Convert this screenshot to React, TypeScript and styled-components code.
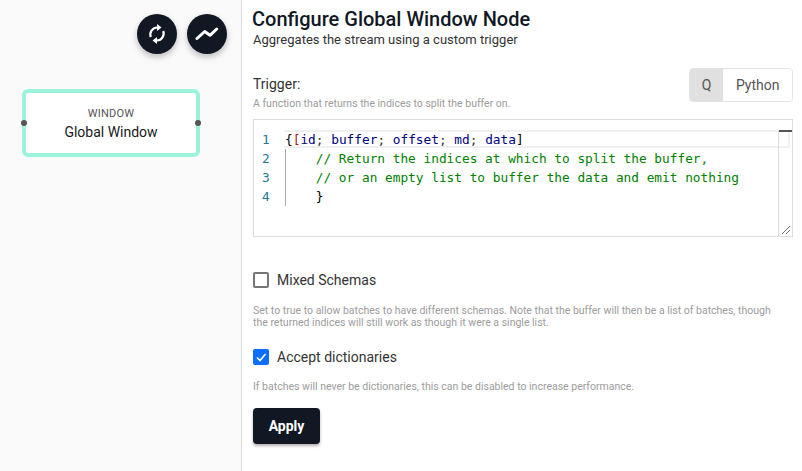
import React from "react";
import styled, { createGlobalStyle } from "styled-components";

const GlobalStyle = createGlobalStyle`
  html, body {
    margin: 0;
    padding: 0;
    background: #fff;
    font-family: Roboto, "Liberation Sans", sans-serif;
  }
`;

const Page = styled.div`
  display: grid;
  grid-template-columns: 242px 1fr;
  width: 802px;
  height: 471px;
  overflow: hidden;
`;

const Canvas = styled.aside`
  position: relative;
  background: #fafafa;
  border-right: 1px solid #e0e0e0;
  box-sizing: border-box;
`;

const RoundButtons = styled.div`
  position: absolute;
  top: 14px;
  left: 137px;
  display: flex;
  gap: 10px;
`;

const RoundButton = styled.div`
  width: 40px;
  height: 40px;
  border-radius: 50%;
  background: #111824;
  color: #fff;
  display: flex;
  align-items: center;
  justify-content: center;
  box-shadow: 0 3px 6px rgba(0, 0, 0, 0.25);
`;

const Node = styled.div`
  position: absolute;
  left: 22px;
  top: 89px;
  width: 178px;
  height: 68px;
  box-sizing: border-box;
  border: 4px solid #9bf3dc;
  border-radius: 6px;
  padding-top: 2px;
  background: #fff;
  display: flex;
  flex-direction: column;
  align-items: center;
  justify-content: center;
`;

const NodeType = styled.div`
  font-size: 11px;
  line-height: 14px;
  letter-spacing: 0.2px;
  color: #555;
  margin-bottom: 2px;
`;

const NodeName = styled.div`
  font-size: 14px;
  line-height: 18px;
  color: #1a1a1a;
`;

const Handle = styled.span<{ $side: "left" | "right" }>`
  position: absolute;
  top: 27px;
  ${(p) => p.$side}: -5px;
  width: 6px;
  height: 6px;
  border-radius: 50%;
  background: #555;
`;

const Form = styled.main`
  padding: 7px 9px 0 11px;
  display: flex;
  flex-direction: column;
`;

const Title = styled.h1`
  margin: 0 0 0 -1px;
  font-size: 20px;
  line-height: 24px;
  font-weight: 500;
  color: #111824;
`;

const Subtitle = styled.p`
  margin: 0;
  font-size: 13px;
  line-height: 18px;
  color: #333;
`;

const TriggerHeader = styled.div`
  display: flex;
  justify-content: space-between;
  align-items: flex-start;
  margin-top: 19px;
  height: 51px;
`;

const Label = styled.div`
  font-size: 14px;
  line-height: 18px;
  color: #333;
  margin-top: 7px;
`;

const Help = styled.p`
  margin: 0;
  font-size: 10.5px;
  line-height: 12px;
  color: #9c9c9c;
`;

const TriggerHelp = styled(Help)`
  margin-top: 5px;
`;

const Toggle = styled.div`
  display: flex;
  box-sizing: border-box;
  width: 104px;
  height: 34px;
  border: 1px solid #e3e3e3;
  border-radius: 4px;
  overflow: hidden;
`;

const ToggleOption = styled.div<{ $active?: boolean; $width: number }>`
  width: ${(p) => p.$width}px;
  display: flex;
  align-items: center;
  justify-content: center;
  font-size: 14px;
  color: #555;
  background: ${(p) => (p.$active ? "#e0e0e0" : "#fff")};
`;

const Editor = styled.div`
  position: relative;
  height: 118px;
  box-sizing: border-box;
  border: 1px solid #ddd;
  padding-top: 10px;
  font-family: "DejaVu Sans Mono", monospace;
  font-size: 12.79px;
  line-height: 19px;
`;

const CurrentLine = styled.div`
  position: absolute;
  left: 30px;
  right: 2px;
  top: 10px;
  height: 14px;
  border: solid #f0f0f0;
  border-width: 2px 2px 2px 0;
`;

const ScrollMarker = styled.div`
  position: absolute;
  top: 10px;
  right: 0;
  bottom: 0;
  width: 13px;
  border-left: 1px solid #ddd;
  &::before {
    content: "";
    display: block;
    height: 2px;
    background: #555;
  }
`;

const ResizeGrip = styled.svg`
  position: absolute;
  right: 1px;
  bottom: 1px;
`;

const CodeLine = styled.div`
  position: relative;
  display: flex;
  height: 19px;
`;

const LineNumber = styled.span`
  width: 31px;
  padding-left: 8px;
  box-sizing: border-box;
  color: #237893;
  flex-shrink: 0;
`;

const Code = styled.span<{ $guide?: boolean }>`
  white-space: pre;
  color: #000080;
  ${(p) => p.$guide && "box-shadow: inset 1px 0 0 #aaa;"}
`;

const Bracket = styled.span<{ $color: string }>`
  color: ${(p) => p.$color};
`;

const Comment = styled.span`
  color: #008000;
`;

const Semi = styled.span`
  color: #333;
`;

const CheckRow = styled.label<{ $top: number }>`
  display: flex;
  align-items: center;
  gap: 8px;
  margin-top: ${(p) => p.$top}px;
  font-size: 14px;
  line-height: 18px;
  color: #333;
`;

const Check = styled.span<{ $checked?: boolean }>`
  width: 16px;
  height: 16px;
  box-sizing: border-box;
  border-radius: 2px;
  display: flex;
  align-items: center;
  justify-content: center;
  border: ${(p) => (p.$checked ? "none" : "2px solid #767676")};
  background: ${(p) => (p.$checked ? "#0d6efd" : "#fff")};
`;

const CheckHelp = styled(Help)<{ $top: number }>`
  margin-top: ${(p) => p.$top}px;
  white-space: nowrap;
`;

const ApplyButton = styled.button`
  margin-top: 15px;
  width: 67px;
  height: 36px;
  border: none;
  border-radius: 4px;
  background: #111824;
  color: #fff;
  font-family: inherit;
  font-size: 14px;
  font-weight: 700;
  box-shadow: 0 2px 3px rgba(0, 0, 0, 0.3);
`;

const App = () => {
  return (
    <Page>
      <GlobalStyle />
      <Canvas>
        <RoundButtons>
          <RoundButton>
            <svg width="24" height="24" viewBox="0 0 24 24" fill="none" stroke="#fff" strokeWidth="2.2">
              <path d="M5.8 15 A7 7 0 0 1 12 5.5" />
              <path d="M18.2 9 A7 7 0 0 1 12 18.5" />
              <path d="M12 2 L16.5 5.5 L12 9 Z" fill="#fff" stroke="none" />
              <path d="M12 15 L7.5 18.5 L12 22 Z" fill="#fff" stroke="none" />
            </svg>
          </RoundButton>
          <RoundButton>
            <svg width="24" height="24" viewBox="0 0 24 24" fill="none" stroke="#fff" strokeWidth="3" strokeLinecap="round" strokeLinejoin="round">
              <path d="M2 16.5 L9.7 9.5 L15 13.3 L21.7 7" />
            </svg>
          </RoundButton>
        </RoundButtons>
        <Node>
          <Handle $side="left" />
          <NodeType>WINDOW</NodeType>
          <NodeName>Global Window</NodeName>
          <Handle $side="right" />
        </Node>
      </Canvas>
      <Form>
        <Title>Configure Global Window Node</Title>
        <Subtitle>Aggregates the stream using a custom trigger</Subtitle>
        <TriggerHeader>
          <div>
            <Label>Trigger:</Label>
            <TriggerHelp>A function that returns the indices to split the buffer on.</TriggerHelp>
          </div>
          <Toggle>
            <ToggleOption $active $width={34}>Q</ToggleOption>
            <ToggleOption $width={70}>Python</ToggleOption>
          </Toggle>
        </TriggerHeader>
        <Editor>
          <CurrentLine />
          <ScrollMarker />
          <CodeLine>
            <LineNumber>1</LineNumber>
            <Code>
              <Bracket $color="#000">{"{"}</Bracket>
              <Bracket $color="#a31515">[</Bracket>id<Semi>;</Semi> buffer<Semi>;</Semi> offset<Semi>;</Semi> md<Semi>;</Semi> data<Bracket $color="#000">]</Bracket>
            </Code>
          </CodeLine>
          <CodeLine>
            <LineNumber>2</LineNumber>
            <Code $guide>
              <Comment>    // Return the indices at which to split the buffer,</Comment>
            </Code>
          </CodeLine>
          <CodeLine>
            <LineNumber>3</LineNumber>
            <Code $guide>
              <Comment>    // or an empty list to buffer the data and emit nothing</Comment>
            </Code>
          </CodeLine>
          <CodeLine>
            <LineNumber>4</LineNumber>
            <Code $guide>
              <Bracket $color="#000">{"    }"}</Bracket>
            </Code>
          </CodeLine>
          <ResizeGrip width="10" height="10" viewBox="0 0 10 10" stroke="#777" strokeWidth="1">
            <path d="M1 9 L9 1 M5 9 L9 5" />
          </ResizeGrip>
        </Editor>
        <CheckRow $top={34}>
          <Check />
          Mixed Schemas
        </CheckRow>
        <CheckHelp $top={16}>
          Set to true to allow batches to have different schemas. Note that the buffer will then be a list of batches, though
          <br />
          the returned indices will still work as though it were a single list.
        </CheckHelp>
        <CheckRow $top={19}>
          <Check $checked>
            <svg width="14" height="14" viewBox="0 0 14 14" fill="none" stroke="#fff" strokeWidth="1.6">
              <path d="M3 7.5 L6 10.5 L11.5 4" />
            </svg>
          </Check>
          Accept dictionaries
        </CheckRow>
        <CheckHelp $top={15}>
          If batches will never be dictionaries, this can be disabled to increase performance.
        </CheckHelp>
        <div>
          <ApplyButton>Apply</ApplyButton>
        </div>
      </Form>
    </Page>
  );
};

export default App;
